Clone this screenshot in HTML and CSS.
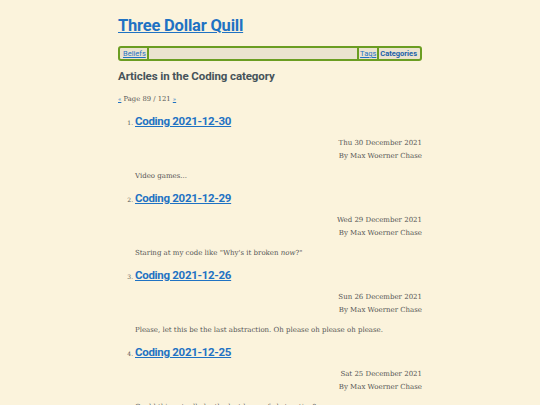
FILE: index.html
```html
<!DOCTYPE html>
<html lang="en">
<head>
    <meta charset="UTF-8">
    <meta name="viewport" content="width=device-width, initial-scale=1.0">
    <title>Three Dollar Quill — Coding</title>
    <link rel="stylesheet" href="styles.css">
</head>
<body>
    <div class="page">
        <h1 class="site-title"><a href="#">Three Dollar Quill</a></h1>

        <nav class="site-nav">
            <a class="nav-item nav-left" href="#">Beliefs</a>
            <span class="nav-fill"></span>
            <a class="nav-item nav-right" href="#">Tags</a>
            <a class="nav-item nav-right nav-current" href="#">Categories</a>
        </nav>

        <h2 class="section-title">Articles in the Coding category</h2>

        <p class="pager"><a href="#">«</a> Page 89 / 121 <a href="#">»</a></p>

        <!-- article list -->
        <ol class="articles">
            <li class="article">
                <h3 class="article-title"><a href="#">Coding 2021-12-30</a></h3>
                <div class="article-meta">
                    <div>Thu 30 December 2021</div>
                    <div>By Max Woerner Chase</div>
                </div>
                <p class="article-summary">Video games...</p>
            </li>
            <li class="article">
                <h3 class="article-title"><a href="#">Coding 2021-12-29</a></h3>
                <div class="article-meta">
                    <div>Wed 29 December 2021</div>
                    <div>By Max Woerner Chase</div>
                </div>
                <p class="article-summary">Staring at my code like "Why's it broken <em>now</em>?"</p>
            </li>
            <li class="article">
                <h3 class="article-title"><a href="#">Coding 2021-12-26</a></h3>
                <div class="article-meta">
                    <div>Sun 26 December 2021</div>
                    <div>By Max Woerner Chase</div>
                </div>
                <p class="article-summary">Please, let this be the last abstraction. Oh please oh please oh please.</p>
            </li>
            <li class="article">
                <h3 class="article-title"><a href="#">Coding 2021-12-25</a></h3>
                <div class="article-meta">
                    <div>Sat 25 December 2021</div>
                    <div>By Max Woerner Chase</div>
                </div>
                <p class="article-summary">Could this actually be the last layer of abstraction?</p>
            </li>
        </ol>
    </div>
</body>
</html>
```

FILE: styles.css
```css
body {
    margin: 0;
    padding: 0;
    background: #fbf3dc;
    color: #555;
    font-family: "DejaVu Serif", serif;
    font-size: 7px;
}

a {
    color: #1f72c3;
}

.page {
    width: 304px;
    margin: 0 auto;
    padding-top: 14px;
}

.site-title {
    margin: 0 0 8px;
    font-family: "Roboto", sans-serif;
    font-size: 16.5px;
    font-weight: 700;
    letter-spacing: -0.2px;
    line-height: 24px;
}

.site-nav {
    display: flex;
    align-items: stretch;
    height: 11px;
    border: 2px solid #6b9d22;
    border-radius: 3px;
    background: #ebe3cf;
    padding: 0 2px;
    font-family: "Roboto", sans-serif;
    font-size: 7.5px;
    line-height: 11px;
}

.nav-item {
    padding: 0 1px;
}

.nav-left {
    border-right: 2px solid #6b9d22;
}

.nav-right {
    border-left: 2px solid #6b9d22;
}

.nav-fill {
    flex: 1;
}

.nav-current {
    font-weight: 700;
    text-decoration: none;
    color: #1a5fa8;
}

.section-title {
    margin: 6px 0 0;
    font-family: "Roboto", sans-serif;
    font-size: 11.5px;
    font-weight: 700;
    letter-spacing: -0.1px;
    line-height: 18px;
    color: #46535a;
}

.pager {
    margin: 8px 0 0;
    font-size: 6.8px;
    line-height: 12px;
}

.pager a {
    font-size: 5.5px;
}

.articles {
    margin: 7px 0 0;
    padding-left: 17px;
    font-size: 6px;
}

.article-title {
    margin: 0;
    font-family: "Roboto", sans-serif;
    font-size: 11.5px;
    font-weight: 700;
    letter-spacing: -0.3px;
    line-height: 18px;
}

.article-meta {
    margin-top: 7px;
    text-align: right;
    font-size: 7px;
    line-height: 13px;
}

.article-summary {
    margin: 7px 0 7px;
    font-size: 7px;
    line-height: 12px;
}
```
